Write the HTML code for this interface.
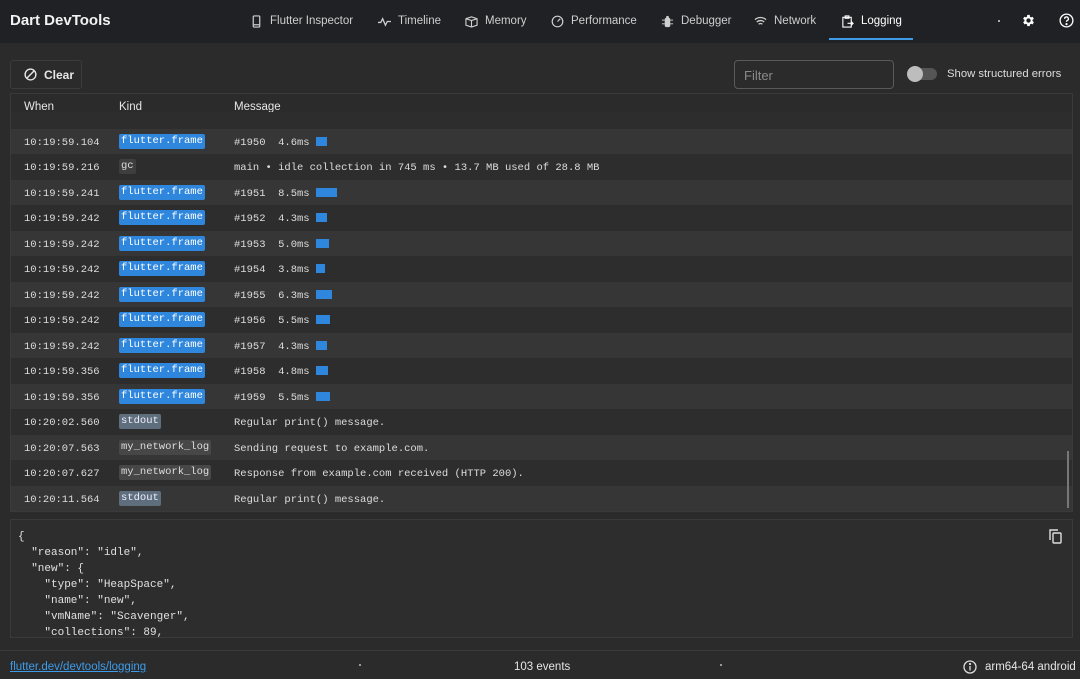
<!DOCTYPE html>
<html><head><meta charset="utf-8"><style>
*{box-sizing:border-box;margin:0;padding:0}
body{width:1080px;height:679px;background:#2b2b2b;font-family:"Liberation Sans",sans-serif;color:#e6e6e6;position:relative;overflow:hidden}
.top{position:absolute;left:0;top:0;width:1080px;height:43px;background:#202125}
.title{position:absolute;left:10px;top:12px;font-size:15px;font-weight:bold;color:#f2f2f2}
.tab{position:absolute;top:14px;font-size:11.5px;color:#cfcfcf;display:flex;align-items:center;gap:7px;height:14px}
.tab svg{width:13px;height:13px}
.ind{position:absolute;left:829px;top:38px;width:84px;height:2px;background:#3d9be8}
.btn{position:absolute;left:10px;top:60px;width:72px;height:29px;border:1px solid #3c3c3c;border-radius:3px;font-size:12px;font-weight:bold;display:flex;align-items:center;padding-left:13px;gap:7px}
.filter{position:absolute;left:734px;top:60px;width:160px;height:29px;border:1px solid #5a5a5a;border-radius:4px;font-size:13px;color:#8a8a8a;padding:7px 9px}
.tog{position:absolute;left:908px;top:68px;width:29px;height:12px;border-radius:6px;background:#555}
.tog:after{content:"";position:absolute;left:-1px;top:-2px;width:16px;height:16px;border-radius:50%;background:#bdbdbd}
.tl{position:absolute;left:947px;top:68px;font-size:11.3px;color:#ddd}
.table{position:absolute;left:10px;top:93px;width:1063px;height:419px;border:1px solid #3a3a3a;overflow:hidden;background:#2b2b2b}
.hdr{position:absolute;top:7px;font-size:11.5px;color:#e6e6e6}
.rows{position:absolute;left:0;width:100%}
.r{height:25.47px;position:relative;font-family:"Liberation Mono",monospace;font-size:10.5px;color:#ddd}
.r.l{background:#363636}.r.d{background:#2d2d2d}
.r span{position:absolute;top:8px}
.w{left:13px}.m{left:223px;white-space:pre}
.k{left:108px;top:5px!important;padding:1px 2px;border-radius:2px;line-height:13px}
.ff{background:#2f86dd;color:#fff}.gc{background:#3e3e3e}.so{background:#5f6e7c;color:#eef}.nl{background:#474747}
.bar{display:inline-block;height:9px;background:#2f86dd;vertical-align:-1px;margin-left:6px}
.sb{position:absolute;left:1067px;top:451px;width:2px;height:57px;background:#777}
.det{position:absolute;left:10px;top:519px;width:1063px;height:119px;border:1px solid #3a3a3a;background:#2d2d2d;font-family:"Liberation Mono",monospace;font-size:11px;color:#e0e0e0;white-space:pre;line-height:16px;padding:9px 7px}
.foot{position:absolute;left:0;top:650px;width:1080px;height:29px;border-top:1px solid #3a3a3a;font-size:11.5px}
.foot span{position:absolute;top:10px}
</style></head><body>
<div class="top">
<div class="title">Dart DevTools</div>
<div class="tab" style="left:250px"><svg viewBox="0 0 14 14" fill="none" stroke="#cfcfcf" stroke-width="1.3"><rect x="3.5" y="1" width="7" height="12" rx="1"/><line x1="4" y1="10.5" x2="10" y2="10.5"/></svg>Flutter Inspector</div>
<div class="tab" style="left:378px"><svg viewBox="0 0 14 14" fill="none" stroke="#cfcfcf" stroke-width="1.4"><path d="M0 8h3l2-4 3 7 2-4h4"/></svg>Timeline</div>
<div class="tab" style="left:465px"><svg viewBox="0 0 14 14" fill="none" stroke="#cfcfcf" stroke-width="1.2"><path d="M1 4l6-2 6 2v7l-6 2-6-2z M1 4l6 2 6-2 M7 6v7"/></svg>Memory</div>
<div class="tab" style="left:551px"><svg viewBox="0 0 14 14" fill="none" stroke="#cfcfcf" stroke-width="1.3"><circle cx="7" cy="7" r="5.7"/><path d="M7 7l3-3"/></svg>Performance</div>
<div class="tab" style="left:661px"><svg viewBox="0 0 14 14" fill="#cfcfcf"><rect x="4" y="3" width="6" height="10" rx="2"/><rect x="1" y="5" width="3" height="1"/><rect x="10" y="5" width="3" height="1"/><rect x="1" y="9" width="3" height="1"/><rect x="10" y="9" width="3" height="1"/><circle cx="7" cy="2.5" r="1.5"/></svg>Debugger</div>
<div class="tab" style="left:754px"><svg viewBox="0 0 14 14" fill="none" stroke="#cfcfcf" stroke-width="1.4"><path d="M1 5a9 9 0 0 1 12 0M3 7.5a6 6 0 0 1 8 0M5 10a3 3 0 0 1 4 0"/></svg>Network</div>
<div class="tab" style="left:841px;color:#fff"><svg viewBox="0 0 14 14" fill="none" stroke="#fff" stroke-width="1.2"><rect x="2" y="2.5" width="9" height="10.5"/><rect x="4.5" y="1" width="4" height="2.5"/><path d="M7 9h6M11 7l2 2-2 2"/></svg>Logging</div>
<div class="ind"></div>
<div style="position:absolute;left:998px;top:20px;width:2px;height:2px;background:#aaa"></div>
<svg style="position:absolute;left:1021px;top:13px" width="15" height="15" viewBox="0 0 24 24" fill="#fff"><path d="M19.4 13a7.5 7.5 0 0 0 0-2l2.1-1.6-2-3.5-2.5 1a7 7 0 0 0-1.7-1L15 3h-4l-.4 2.9a7 7 0 0 0-1.7 1l-2.5-1-2 3.5L6.6 11a7.5 7.5 0 0 0 0 2l-2.1 1.6 2 3.5 2.5-1a7 7 0 0 0 1.7 1L11 21h4l.4-2.9a7 7 0 0 0 1.7-1l2.5 1 2-3.5zM13 15.5a3.5 3.5 0 1 1 0-7 3.5 3.5 0 0 1 0 7z" transform="translate(-1 0)"/></svg>
<svg style="position:absolute;left:1059px;top:13px" width="15" height="15" viewBox="0 0 16 16" fill="none" stroke="#fff" stroke-width="1.4"><circle cx="8" cy="8" r="6.8"/><path d="M6 6.2a2 2 0 1 1 2.8 1.8C8.2 8.3 8 8.8 8 9.5"/><circle cx="8" cy="11.8" r=".5" fill="#fff"/></svg>
</div>
<div class="btn"><svg width="13" height="13" viewBox="0 0 14 14" fill="none" stroke="#e6e6e6" stroke-width="1.5"><circle cx="7" cy="7" r="5.8"/><path d="M3 11L11 3"/></svg>Clear</div>
<div class="filter">Filter</div>
<div class="tog"></div><div class="tl">Show structured errors</div>
<div class="table">
<div class="hdr" style="left:13px">When</div><div class="hdr" style="left:108px">Kind</div><div class="hdr" style="left:223px">Message</div>
<div class="rows" style="top:0px">
<div class="r d" style="height:17px;margin-top:18px"></div>
<div class="r l"><span class="w">10:19:59.104</span><span class="k ff">flutter.frame</span><span class="m">#1950  4.6ms<i class="bar" style="width:11px"></i></span></div>
<div class="r d"><span class="w">10:19:59.216</span><span class="k gc">gc</span><span class="m">main • idle collection in 745 ms • 13.7 MB used of 28.8 MB</span></div>
<div class="r l"><span class="w">10:19:59.241</span><span class="k ff">flutter.frame</span><span class="m">#1951  8.5ms<i class="bar" style="width:21px"></i></span></div>
<div class="r d"><span class="w">10:19:59.242</span><span class="k ff">flutter.frame</span><span class="m">#1952  4.3ms<i class="bar" style="width:11px"></i></span></div>
<div class="r l"><span class="w">10:19:59.242</span><span class="k ff">flutter.frame</span><span class="m">#1953  5.0ms<i class="bar" style="width:13px"></i></span></div>
<div class="r d"><span class="w">10:19:59.242</span><span class="k ff">flutter.frame</span><span class="m">#1954  3.8ms<i class="bar" style="width:9px"></i></span></div>
<div class="r l"><span class="w">10:19:59.242</span><span class="k ff">flutter.frame</span><span class="m">#1955  6.3ms<i class="bar" style="width:16px"></i></span></div>
<div class="r d"><span class="w">10:19:59.242</span><span class="k ff">flutter.frame</span><span class="m">#1956  5.5ms<i class="bar" style="width:14px"></i></span></div>
<div class="r l"><span class="w">10:19:59.242</span><span class="k ff">flutter.frame</span><span class="m">#1957  4.3ms<i class="bar" style="width:11px"></i></span></div>
<div class="r d"><span class="w">10:19:59.356</span><span class="k ff">flutter.frame</span><span class="m">#1958  4.8ms<i class="bar" style="width:12px"></i></span></div>
<div class="r l"><span class="w">10:19:59.356</span><span class="k ff">flutter.frame</span><span class="m">#1959  5.5ms<i class="bar" style="width:14px"></i></span></div>
<div class="r d"><span class="w">10:20:02.560</span><span class="k so">stdout</span><span class="m">Regular print() message.</span></div>
<div class="r l"><span class="w">10:20:07.563</span><span class="k nl">my_network_log</span><span class="m">Sending request to example.com.</span></div>
<div class="r d"><span class="w">10:20:07.627</span><span class="k nl">my_network_log</span><span class="m">Response from example.com received (HTTP 200).</span></div>
<div class="r l"><span class="w">10:20:11.564</span><span class="k so">stdout</span><span class="m">Regular print() message.</span></div>
</div>
</div>
<div class="sb"></div>
<div class="det">{
  "reason": "idle",
  "new": {
    "type": "HeapSpace",
    "name": "new",
    "vmName": "Scavenger",
    "collections": 89,</div>
<svg style="position:absolute;left:1048px;top:528px" width="15" height="16" viewBox="0 0 15 16" fill="none" stroke="#ddd" stroke-width="1.4"><path d="M2 12V2h8"/><rect x="5" y="5" width="8" height="10" rx="1"/></svg>
<div class="foot">
<span style="left:10px;color:#3d9be8;text-decoration:underline">flutter.dev/devtools/logging</span>
<span style="left:359px;top:13px;width:2px;height:2px;background:#999"></span>
<span style="left:514px">103 events</span>
<span style="left:720px;top:13px;width:2px;height:2px;background:#999"></span>
<svg style="position:absolute;left:963px;top:9px" width="14" height="14" viewBox="0 0 14 14" fill="none" stroke="#ddd" stroke-width="1.3"><circle cx="7" cy="7" r="6"/><path d="M7 6v4.5"/><circle cx="7" cy="4" r=".5" fill="#ddd"/></svg>
<span style="left:985px">arm64-64 android</span>
</div>
</body></html>
